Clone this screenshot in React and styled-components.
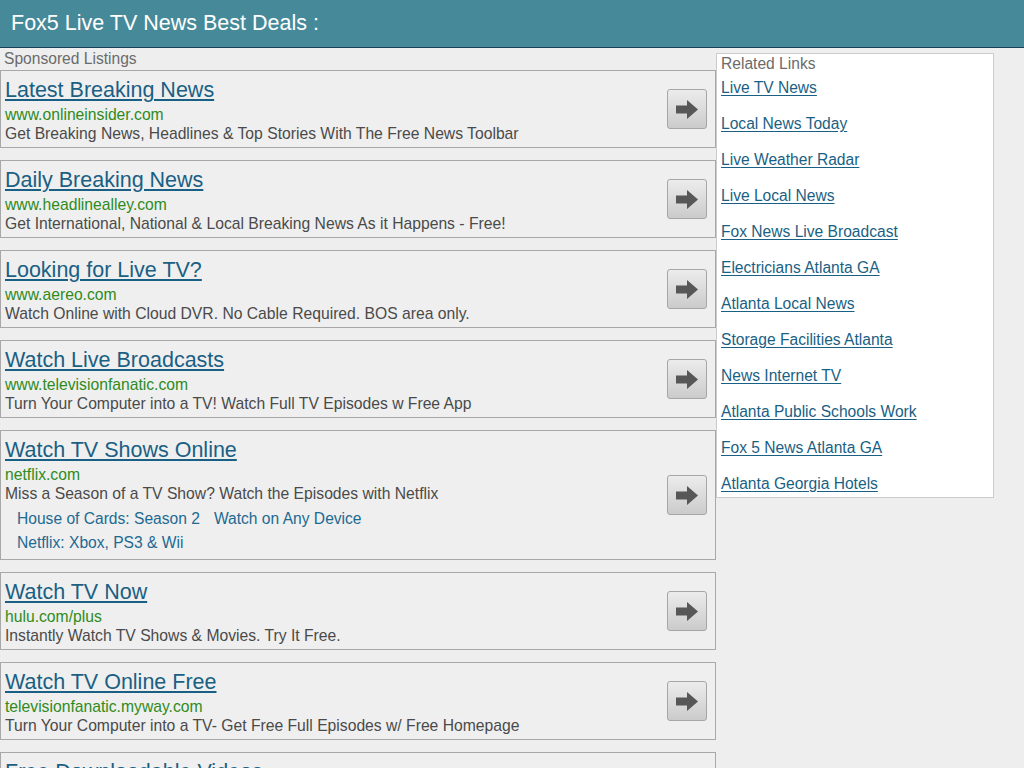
import React from "react";
import styled, { createGlobalStyle } from "styled-components";

const GlobalStyle = createGlobalStyle`
  html, body {
    margin: 0;
    padding: 0;
    background: #eeeeee;
    font-family: "Liberation Sans", Arial, sans-serif;
  }
  a { text-decoration: none; }
`;

const Header = styled.header`
  height: 47px;
  line-height: 47px;
  background: #468a9a;
  border-bottom: 1px solid #1c3f58;
  color: #ffffff;
  font-size: 21.5px;
  padding-left: 11px;
  white-space: nowrap;
`;

const Layout = styled.div`
  display: flex;
  align-items: flex-start;
`;

const Main = styled.main`
  width: 716px;
  flex-shrink: 0;
`;

const SectionLabel = styled.div`
  font-size: 15.6px;
  line-height: 22px;
  color: #6b6b6b;
  padding-left: 4px;
`;

const AdBox = styled.div`
  display: flex;
  align-items: center;
  border: 1px solid #a8a8a8;
  background: #efefef;
  padding: 6px 8px 4px 4px;
  margin-bottom: 12px;
`;

const AdText = styled.div`
  flex: 1;
  min-width: 0;
`;

const AdTitle = styled.a`
  display: inline-block;
  font-size: 21.5px;
  line-height: 26px;
  color: #1a5f84;
  text-decoration: underline;
  text-underline-offset: 2px;
`;

const AdUrl = styled.div`
  margin-top: 2px;
  font-size: 15.7px;
  line-height: 19px;
  color: #2e8b1c;
`;

const AdDesc = styled.div`
  font-size: 15.7px;
  line-height: 19px;
  color: #4a4a4a;
  white-space: nowrap;
`;

const SiteLinks = styled.div`
  margin-top: 4px;
  padding-left: 12px;
`;

const SiteRow = styled.div`
  display: flex;
  gap: 14px;
  font-size: 15.6px;
  line-height: 24px;
`;

const SiteLink = styled.a`
  color: #1d6a92;
`;

const GoButton = styled.div`
  width: 38px;
  height: 38px;
  flex-shrink: 0;
  border: 1px solid #a6a6a6;
  border-radius: 3px;
  background: linear-gradient(#ececec, #cbcbcb);
  display: flex;
  align-items: center;
  justify-content: center;
  margin-top: -2px;
`;

const Sidebar = styled.aside`
  width: 278px;
  box-sizing: border-box;
  margin-top: 5px;
  background: #ffffff;
  border: 1px solid #cccccc;
  padding: 1px 4px 3px 4px;
`;

const SideHeading = styled.div`
  font-size: 15.6px;
  line-height: 18px;
  color: #6b6b6b;
`;

const SideList = styled.div`
  display: flex;
  flex-direction: column;
  align-items: flex-start;
  gap: 16px;
  margin-top: 5px;
`;

const SideLink = styled.a`
  font-size: 15.6px;
  line-height: 20px;
  color: #1a5f84;
  text-decoration: underline;
  text-underline-offset: 2px;
`;

const Arrow = () => (
  <svg width="38" height="38" viewBox="0 0 38 38" style={{ display: "block" }}>
    <polygon
      points="8,15.5 19,15.5 19,10 30,19.5 19,29 19,23.5 8,23.5"
      fill="#575757"
    />
  </svg>
);

const ads = [
  {
    title: "Latest Breaking News",
    url: "www.onlineinsider.com",
    desc: "Get Breaking News, Headlines & Top Stories With The Free News Toolbar",
  },
  {
    title: "Daily Breaking News",
    url: "www.headlinealley.com",
    desc: "Get International, National & Local Breaking News As it Happens - Free!",
  },
  {
    title: "Looking for Live TV?",
    url: "www.aereo.com",
    desc: "Watch Online with Cloud DVR. No Cable Required. BOS area only.",
  },
  {
    title: "Watch Live Broadcasts",
    url: "www.televisionfanatic.com",
    desc: "Turn Your Computer into a TV! Watch Full TV Episodes w Free App",
  },
  {
    title: "Watch TV Shows Online",
    url: "netflix.com",
    desc: "Miss a Season of a TV Show? Watch the Episodes with Netflix",
    sitelinks: [
      ["House of Cards: Season 2", "Watch on Any Device"],
      ["Netflix: Xbox, PS3 & Wii"],
    ],
  },
  {
    title: "Watch TV Now",
    url: "hulu.com/plus",
    desc: "Instantly Watch TV Shows & Movies. Try It Free.",
  },
  {
    title: "Watch TV Online Free",
    url: "televisionfanatic.myway.com",
    desc: "Turn Your Computer into a TV- Get Free Full Episodes w/ Free Homepage",
  },
  {
    title: "Free Downloadable Videos",
    url: "www.freevideosonline.com",
    desc: "Download Free Videos, Movies & TV Episodes Instantly",
  },
];

const related = [
  "Live TV News",
  "Local News Today",
  "Live Weather Radar",
  "Live Local News",
  "Fox News Live Broadcast",
  "Electricians Atlanta GA",
  "Atlanta Local News",
  "Storage Facilities Atlanta",
  "News Internet TV",
  "Atlanta Public Schools Work",
  "Fox 5 News Atlanta GA",
  "Atlanta Georgia Hotels",
];

export default function App() {
  return (
    <>
      <GlobalStyle />
      <Header>Fox5 Live TV News Best Deals :</Header>
      <Layout>
        <Main>
          <SectionLabel>Sponsored Listings</SectionLabel>
          {ads.map((ad) => (
            <AdBox key={ad.title}>
              <AdText>
                <AdTitle href="#">{ad.title}</AdTitle>
                <AdUrl>{ad.url}</AdUrl>
                <AdDesc>{ad.desc}</AdDesc>
                {ad.sitelinks && (
                  <SiteLinks>
                    {ad.sitelinks.map((row, i) => (
                      <SiteRow key={i}>
                        {row.map((l) => (
                          <SiteLink href="#" key={l}>
                            {l}
                          </SiteLink>
                        ))}
                      </SiteRow>
                    ))}
                  </SiteLinks>
                )}
              </AdText>
              <GoButton>
                <Arrow />
              </GoButton>
            </AdBox>
          ))}
        </Main>
        <Sidebar>
          <SideHeading>Related Links</SideHeading>
          <SideList>
            {related.map((r) => (
              <SideLink href="#" key={r}>
                {r}
              </SideLink>
            ))}
          </SideList>
        </Sidebar>
      </Layout>
    </>
  );
}
